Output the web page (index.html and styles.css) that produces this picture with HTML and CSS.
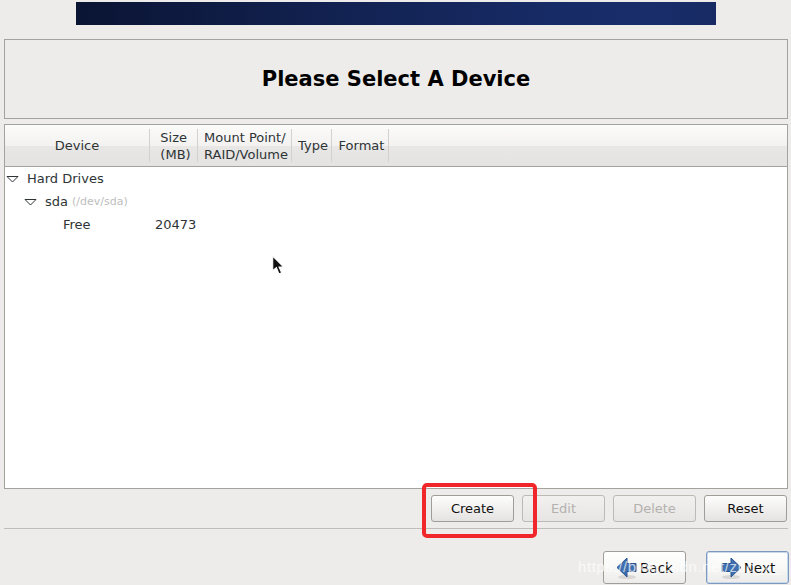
FILE: index.html
```html
<!DOCTYPE html>
<html lang="en">
<head>
<meta charset="utf-8">
<title>Please Select A Device</title>
<link rel="stylesheet" href="styles.css">
</head>
<body>
<div class="page">
  <div class="banner"></div>
  <div class="title-box"><h1>Please Select A Device</h1></div>
  <div class="table-box">
    <div class="thead">
      <div class="th c-device">Device</div>
      <div class="th c-size">Size<br>(MB)</div>
      <div class="th c-mount">Mount Point/<br>RAID/Volume</div>
      <div class="th c-type">Type</div>
      <div class="th c-format">Format</div>
      <div class="th-fill"></div>
    </div>
    <div class="tbody">
      <div class="row lvl-0"><svg class="arrow" viewBox="0 0 13 8"><path d="M1 1.5h11L6.5 7z"/></svg><span>Hard Drives</span></div>
      <div class="row lvl-1"><svg class="arrow" viewBox="0 0 13 8"><path d="M1 1.5h11L6.5 7z"/></svg><span>sda</span><span class="dim">(/dev/sda)</span></div>
      <div class="row lvl-2"><span class="free-name">Free</span><span>20473</span></div>
    </div>
  </div>
  <div class="actions">
    <button class="btn">Create</button>
    <button class="btn" disabled>Edit</button>
    <button class="btn" disabled>Delete</button>
    <button class="btn">Reset</button>
  </div>
  <div class="sep"></div>
  <div class="nav">
    <button class="btn nav-btn">
      <svg class="nav-icon" viewBox="0 0 22 22"><ellipse class="icon-shadow" cx="11" cy="20" rx="9" ry="2"/><path d="M1 10.5 11 1v5.5h9v8h-9V20z" fill="#3f6fae" stroke="#2a5590"/></svg><span>Back</span>
    </button>
    <button class="btn nav-btn primary">
      <svg class="nav-icon" viewBox="0 0 22 22"><ellipse class="icon-shadow" cx="11" cy="20" rx="9" ry="2"/><path d="M21 10.5 11 1v5.5H2v8h9V20z" fill="#3f6fae" stroke="#2a5590"/></svg><span>Next</span>
    </button>
  </div>

  <svg class="cursor" viewBox="0 0 14 20"><path d="M1.5 1v14l3.5-3 2.5 6 2.5-1-2.5-5.5H12z" fill="#111" stroke="#fff" stroke-width="1"/></svg>
  <div class="highlight"></div>
  <div class="watermark">https://blog.csdn.net/zuo_r_</div>
</div>
</body>
</html>
```
FILE: styles.css
```css
* { box-sizing: border-box; }
html, body { margin: 0; padding: 0; }
body { background: #edeceb; font-family: "DejaVu Sans", sans-serif; font-size: 13px; color: #2e3436; }
.page { position: relative; width: 791px; height: 585px; overflow: hidden; padding: 2px 3px 0 4px; }
.banner { width: 640px; height: 23px; margin-left: 72px; background: linear-gradient(90deg, #0a1433 0%, #11204d 35%, #172b66 75%, #182d6a 90%, #172a63 100%); }
.title-box { height: 80px; margin-top: 14px; border: 1px solid #a5a29e; display: flex; align-items: center; justify-content: center; }
.title-box h1 { margin: 0; font-size: 21px; font-weight: 700; color: #000; }
.table-box { height: 365px; margin-top: 5px; border: 1px solid #a5a29e; background: #fff; display: flex; flex-direction: column; }
.thead { height: 42px; flex: none; display: flex; border-bottom: 1px solid #a5a29e; background: linear-gradient(180deg, #fbfbfa 0%, #f3f2f1 50%, #e8e7e5 51%, #e4e3e1 100%); padding-top: 4px; }
.th { height: 33px; border-right: 1px solid #d3d1ce; display: flex; align-items: center; justify-content: center; text-align: left; line-height: 17px; white-space: nowrap; }
.c-device { width: 145px; }
.c-size { width: 48px; padding-left: 4px; }
.c-mount { width: 94px; padding-left: 3px; }
.c-type { width: 40px; padding-left: 3px; }
.c-format { width: 57px; padding-left: 3px; }
.tbody { flex: 1; padding-top: 0; }
.row { height: 23px; display: flex; align-items: center; white-space: nowrap; }
.lvl-0 { padding-left: 1px; }
.lvl-1 { padding-left: 19px; }
.lvl-2 { padding-left: 58px; }
.arrow { width: 13px; height: 8px; margin-right: 8px; fill: #fff; stroke: #2e3436; stroke-width: 1; flex: none; }
.dim { color: #bdbdbd; font-size: 11px; margin-left: 4px; }
.free-name { width: 92px; }
.actions { display: flex; justify-content: flex-end; gap: 8px; margin-top: 6px; padding-right: 1px; }
.btn { width: 83px; height: 27px; border: 1px solid #a09d99; border-radius: 3px; background: linear-gradient(180deg, #fdfdfd 0%, #f2f1f0 45%, #e4e3e1 100%); font: 13px "DejaVu Sans", sans-serif; color: #111; padding: 0; display: flex; align-items: center; justify-content: center; }
.btn:disabled { color: #b3b1ae; background: linear-gradient(180deg, #f2f1f0 0%, #e6e5e3 100%); border-color: #bdbab6; }
.sep { height: 1px; margin-top: 6px; background: #bfbdb9; }
.nav { display: flex; justify-content: flex-end; gap: 20px; margin-top: 22px; margin-right: -1px; }
.nav-btn { height: 33px; gap: 2px; background: linear-gradient(180deg, #ffffff 0%, #f8f8f7 50%, #ecebe9 100%); }
.nav-btn span { font-size: 13.5px; }
.primary { border-color: #7c99c0; box-shadow: inset 0 0 0 1px #c9d8ea; }
.nav-icon { width: 22px; height: 22px; flex: none; }
.icon-shadow { fill: #d8d7d5; }
.cursor { position: absolute; left: 271px; top: 255px; width: 15px; height: 21px; }
.highlight { position: absolute; left: 422px; top: 483px; width: 115px; height: 55px; border: 4px solid #f0262b; border-radius: 5px; }
.watermark { position: absolute; left: 578px; top: 558px; font: 15px "Liberation Sans", sans-serif; letter-spacing: 0.6px; color: rgba(255,255,255,0.7); white-space: nowrap; }
```
